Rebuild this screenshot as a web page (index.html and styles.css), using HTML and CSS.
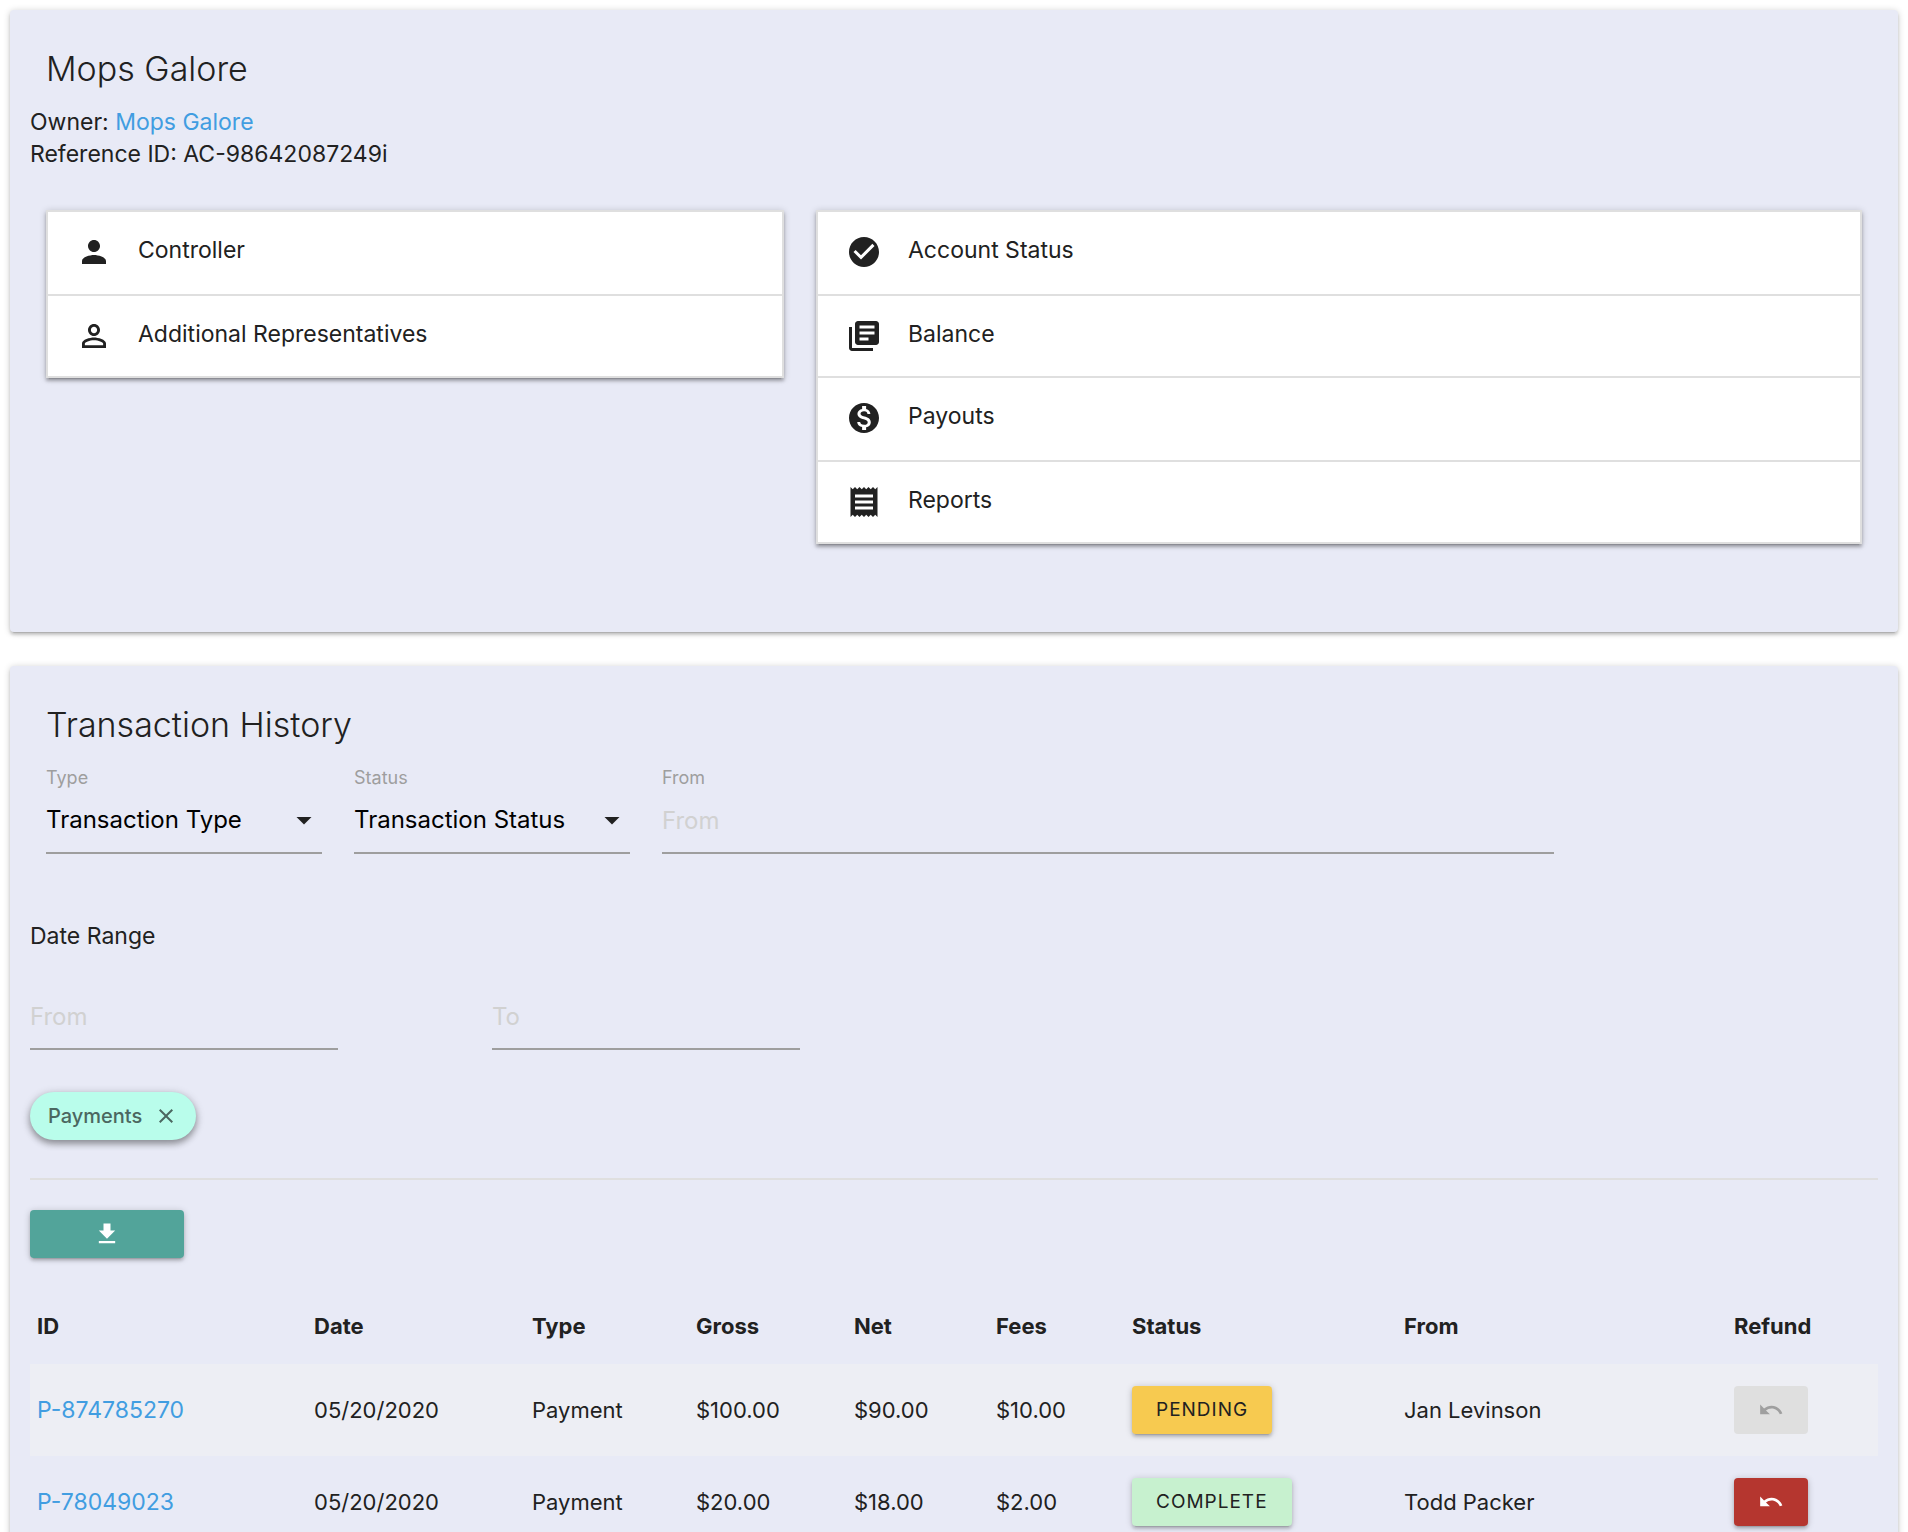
FILE: index.html
```html
<!DOCTYPE html>
<html lang="en">
<head>
  <meta charset="utf-8">
  <meta name="viewport" content="width=device-width, initial-scale=1">
  <title>Mops Galore</title>
  <link rel="stylesheet" href="styles.css">
</head>
<body>
  <main class="page">
    <section class="card card-account">
      <h1 class="title">Mops Galore</h1>
      <p class="line">Owner: <a class="link" href="#owner">Mops Galore</a></p>
      <p class="line">Reference ID: AC-98642087249i</p>

      <div class="lists">
        <div class="list-col">
          <ul class="collection">
            <li class="item">
              <svg class="icon" viewBox="0 0 24 24"><path d="M12 12c2.210 0 4-1.790 4-4s-1.790-4-4-4-4 1.790-4 4 1.790 4 4 4zm0 2c-2.670 0-8 1.340-8 4v2h16v-2c0-2.660-5.330-4-8-4z"/></svg>
              <span>Controller</span>
            </li>
            <li class="item">
              <svg class="icon" viewBox="0 0 24 24"><path d="M12 5.900c1.160 0 2.100.94 2.100 2.100s-.94 2.100-2.100 2.100S9.900 9.160 9.900 8s.94-2.100 2.100-2.100m0 9c2.970 0 6.100 1.460 6.100 2.100v1.100H5.900V17c0-.64 3.130-2.100 6.100-2.100M12 4C9.790 4 8 5.790 8 8s1.790 4 4 4 4-1.790 4-4-1.790-4-4-4zm0 9c-2.670 0-8 1.340-8 4v3h16v-3c0-2.660-5.330-4-8-4z"/></svg>
              <span>Additional Representatives</span>
            </li>
          </ul>
        </div>
        <div class="list-col">
          <ul class="collection">
            <li class="item">
              <svg class="icon" viewBox="0 0 24 24"><path d="M12 2C6.480 2 2 6.480 2 12s4.480 10 10 10 10-4.480 10-10S17.520 2 12 2zm-2 15l-5-5 1.410-1.410L10 14.170l7.590-7.590L19 8l-9 9z"/></svg>
              <span>Account Status</span>
            </li>
            <li class="item">
              <svg class="icon" viewBox="0 0 24 24"><path d="M4 6H2v14c0 1.100.9 2 2 2h14v-2H4V6zm16-4H8c-1.100 0-2 .9-2 2v12c0 1.100.9 2 2 2h12c1.100 0 2-.9 2-2V4c0-1.100-.9-2-2-2zm-1 9H9V9h10v2zm-4 4H9v-2h6v2zm4-8H9V5h10v2z"/></svg>
              <span>Balance</span>
            </li>
            <li class="item">
              <svg class="icon" viewBox="0 0 24 24"><path d="M12 2C6.480 2 2 6.480 2 12s4.480 10 10 10 10-4.480 10-10S17.520 2 12 2zm1.410 16.090V20h-2.670v-1.930c-1.710-.36-3.160-1.460-3.270-3.400h1.960c.1 1.050.82 1.870 2.650 1.870 1.960 0 2.400-.98 2.400-1.590 0-.83-.44-1.610-2.670-2.140-2.480-.6-4.180-1.620-4.180-3.670 0-1.720 1.390-2.840 3.110-3.210V4h2.670v1.950c1.860.45 2.790 1.860 2.850 3.390H14.300c-.05-1.110-.64-1.870-2.220-1.870-1.500 0-2.400.68-2.400 1.640 0 .84.65 1.390 2.670 1.910s4.180 1.390 4.180 3.910c-.01 1.830-1.380 2.830-3.120 3.160z"/></svg>
              <span>Payouts</span>
            </li>
            <li class="item">
              <svg class="icon" viewBox="0 0 24 24"><path d="M18 17H6v-2h12v2zm0-4H6v-2h12v2zm0-4H6V7h12v2zM3 22l1.500-1.500L6 22l1.500-1.500L9 22l1.500-1.500L12 22l1.500-1.500L15 22l1.500-1.500L18 22l1.500-1.500L21 22V2l-1.500 1.500L18 2l-1.500 1.500L15 2l-1.500 1.500L12 2l-1.500 1.500L9 2 7.500 3.500 6 2 4.500 3.500 3 2v20z"/></svg>
              <span>Reports</span>
            </li>
          </ul>
        </div>
      </div>
    </section>

    <section class="card">
      <h2 class="title">Transaction History</h2>

      <form class="filters">
        <div class="field">
          <label class="label" for="type">Type</label>
          <div class="picker">
            <select class="control" id="type"><option>Transaction Type</option></select>
            <svg class="caret" viewBox="0 0 24 24"><path d="M7 10l5 5 5-5z"/></svg>
          </div>
        </div>
        <div class="field">
          <label class="label" for="status">Status</label>
          <div class="picker">
            <select class="control" id="status"><option>Transaction Status</option></select>
            <svg class="caret" viewBox="0 0 24 24"><path d="M7 10l5 5 5-5z"/></svg>
          </div>
        </div>
        <div class="field">
          <label class="label" for="from">From</label>
          <input class="control" id="from" type="text" placeholder="From">
        </div>
      </form>

      <p class="line range-title">Date Range</p>
      <div class="range">
        <input class="control" type="text" placeholder="From" aria-label="Date from">
        <input class="control" type="text" placeholder="To" aria-label="Date to">
      </div>

      <button class="chip" type="button">
        Payments
        <svg class="chip-close" viewBox="0 0 24 24"><path d="M19 6.410L17.590 5 12 10.590 6.410 5 5 6.410 10.590 12 5 17.590 6.410 19 12 13.410 17.590 19 19 17.590 13.410 12z"/></svg>
      </button>

      <hr class="divider">

      <button class="btn btn-download" type="button" aria-label="Download">
        <svg class="btn-icon" viewBox="0 0 24 24"><path d="M19 9h-4V3H9v6H5l7 7 7-7zM5 18v2h14v-2H5z"/></svg>
      </button>

      <table class="table">
        <colgroup>
          <col class="c-id"><col class="c-date"><col class="c-type"><col class="c-gross"><col class="c-net"><col class="c-fees"><col class="c-status"><col class="c-from"><col class="c-refund">
        </colgroup>
        <thead>
          <tr><th>ID</th><th>Date</th><th>Type</th><th>Gross</th><th>Net</th><th>Fees</th><th>Status</th><th>From</th><th>Refund</th></tr>
        </thead>
        <tbody>
          <tr>
            <td><a class="link" href="#P-874785270">P-874785270</a></td>
            <td>05/20/2020</td><td>Payment</td><td>$100.00</td><td>$90.00</td><td>$10.00</td>
            <td><button class="btn btn-pending" type="button">PENDING</button></td>
            <td>Jan Levinson</td>
            <td><button class="btn btn-refund" type="button" aria-label="Refund" disabled><svg class="btn-icon" viewBox="0 0 24 24"><path d="M12.500 8c-2.650 0-5.050.99-6.900 2.600L2 7v9h9l-3.620-3.620c1.390-1.160 3.160-1.880 5.120-1.880 3.540 0 6.550 2.310 7.600 5.500l2.370-.78C21.080 11.030 17.150 8 12.500 8z"/></svg></button></td>
          </tr>
          <tr>
            <td><a class="link" href="#P-78049023">P-78049023</a></td>
            <td>05/20/2020</td><td>Payment</td><td>$20.00</td><td>$18.00</td><td>$2.00</td>
            <td><button class="btn btn-complete" type="button">COMPLETE</button></td>
            <td>Todd Packer</td>
            <td><button class="btn btn-refund" type="button" aria-label="Refund"><svg class="btn-icon" viewBox="0 0 24 24"><path d="M12.500 8c-2.650 0-5.050.99-6.900 2.600L2 7v9h9l-3.620-3.620c1.390-1.160 3.160-1.880 5.120-1.880 3.540 0 6.550 2.310 7.600 5.500l2.370-.78C21.080 11.030 17.150 8 12.500 8z"/></svg></button></td>
          </tr>
        </tbody>
      </table>
    </section>
  </main>
</body>
</html>
```
FILE: styles.css
```css
* {
  box-sizing: border-box;
}

body {
  margin: 0;
  background: #fff;
  color: #212121;
  font-family: Inter, "Liberation Sans", sans-serif;
  font-size: 23px;
  line-height: 32px;
}

/* The page fills the window; rows past its lower edge are cut off. */
.page {
  display: flex;
  flex-direction: column;
  gap: 34px;
  height: 100vh;
  padding: 10px;
  overflow: hidden;
}

.card {
  flex: none;
  padding: 40px 20px 20px;
  border-radius: 4px;
  background: #e8eaf6;
  box-shadow: 0 3px 3px rgba(0, 0, 0, .14), 0 4px 1px -3px rgba(0, 0, 0, .12), 0 1px 7px rgba(0, 0, 0, .2);
}

.card-account {
  padding-bottom: 88px;
}

.title {
  margin: 0 16px 18px;
  font-size: 34px;
  font-weight: 300;
  line-height: 38px;
}

.line {
  margin: 0;
}

.link {
  color: #419de1;
  text-decoration: none;
}

/* Account lists */
.lists {
  display: grid;
  grid-template-columns: 5fr 7fr;
  align-items: start;
  margin-top: 40px;
}

.list-col {
  padding: 0 16px;
}

.collection {
  margin: 0;
  padding: 0;
  border: 2px solid #dfdfdf;
  border-bottom: 0;
  background: #fff;
  list-style: none;
  box-shadow: 0 3px 3px rgba(0, 0, 0, .24), 0 4px 1px -3px rgba(0, 0, 0, .12), 0 1px 7px rgba(0, 0, 0, .2);
}

.item {
  display: flex;
  align-items: center;
  gap: 26px;
  height: 82px;
  padding: 0 28px;
  border-bottom: 2px solid #dfdfdf;
}

.item:nth-child(odd) {
  height: 84px;
  padding-bottom: 2px;
}

.item span {
  padding-bottom: 4px;
}

.icon {
  width: 36px;
  height: 36px;
  fill: #212121;
}

/* Filters */
.filters {
  display: grid;
  grid-template-columns: 1fr 1fr 3fr 1fr;
  padding-top: 4px;
}

.field {
  min-width: 0;
  padding: 0 16px;
}

.label {
  display: block;
  color: #9e9e9e;
  font-size: 18px;
  line-height: 24px;
}

.control {
  display: block;
  width: 100%;
  height: 64px;
  margin: 0;
  padding: 0 0 2px;
  border: 0;
  border-bottom: 2px solid #9e9e9e;
  border-radius: 0;
  outline: 0;
  background: transparent;
  color: #000;
  font: inherit;
  font-size: 24px;
  appearance: none;
}

.control::placeholder {
  color: #d1d1d1;
  opacity: 1;
}

.picker {
  display: grid;
  align-items: center;
}

.picker > * {
  grid-area: 1 / 1;
}

.caret {
  justify-self: end;
  width: 36px;
  height: 36px;
  margin-bottom: 4px;
  fill: #212121;
  pointer-events: none;
}

.range-title {
  margin-top: 66px;
}

.range {
  display: grid;
  grid-template-columns: repeat(12, 1fr);
  margin: 34px 0 42px;
}

.range .control {
  grid-column: 1 / span 2;
}

.range .control + .control {
  grid-column: 4 / span 2;
}

.chip {
  display: flex;
  align-items: center;
  gap: 12px;
  height: 48px;
  padding: 0 18px;
  border: 0;
  border-radius: 24px;
  background: #b9fdeb;
  color: #4b6760;
  font: 500 20px/24px Inter, "Liberation Sans", sans-serif;
  box-shadow: 0 4px 6px rgba(0, 0, 0, .26), 0 2px 10px rgba(0, 0, 0, .24);
}

.chip-close {
  width: 24px;
  height: 24px;
  fill: currentColor;
}

.divider {
  height: 2px;
  margin: 38px 0 30px;
  border: 0;
  background: #dfdfdf;
}

/* Buttons */
.btn {
  display: flex;
  align-items: center;
  justify-content: center;
  height: 48px;
  padding: 0 24px;
  border: 0;
  border-radius: 4px;
  color: #212121;
  font: 400 19px/24px Inter, "Liberation Sans", sans-serif;
  letter-spacing: 1px;
  box-shadow: 0 3px 3px rgba(0, 0, 0, .14), 0 4px 1px -3px rgba(0, 0, 0, .12), 0 1px 7px rgba(0, 0, 0, .2);
}

.btn-icon {
  width: 28px;
  height: 28px;
  fill: #fff;
}

.btn-download {
  width: 154px;
  background: #52a49a;
}

.btn-pending {
  background: #f7ca50;
}

.btn-complete {
  background: #c7f1cf;
}

.btn-refund {
  width: 74px;
  background: #b5362f;
}

.btn-refund:disabled {
  background: #dfdfdf;
  box-shadow: none;
}

.btn-refund:disabled .btn-icon {
  fill: #9f9f9f;
}

/* Transactions */
.table {
  width: 100%;
  margin-top: 30px;
  border-collapse: collapse;
  table-layout: fixed;
}

.table th {
  height: 76px;
  padding: 0 7px;
  font-size: 22px;
  font-weight: 700;
  text-align: left;
}

.table td {
  height: 92px;
  padding: 0 7px;
  font-size: 22px;
}

.table .link {
  font-size: 23px;
}

.table tbody tr:nth-child(odd) {
  background: #edeef4;
}

.c-id { width: 277px; }
.c-date { width: 218px; }
.c-type { width: 164px; }
.c-gross { width: 158px; }
.c-net { width: 142px; }
.c-fees { width: 136px; }
.c-status { width: 272px; }
.c-from { width: 330px; }
.c-refund { width: 151px; }
```
